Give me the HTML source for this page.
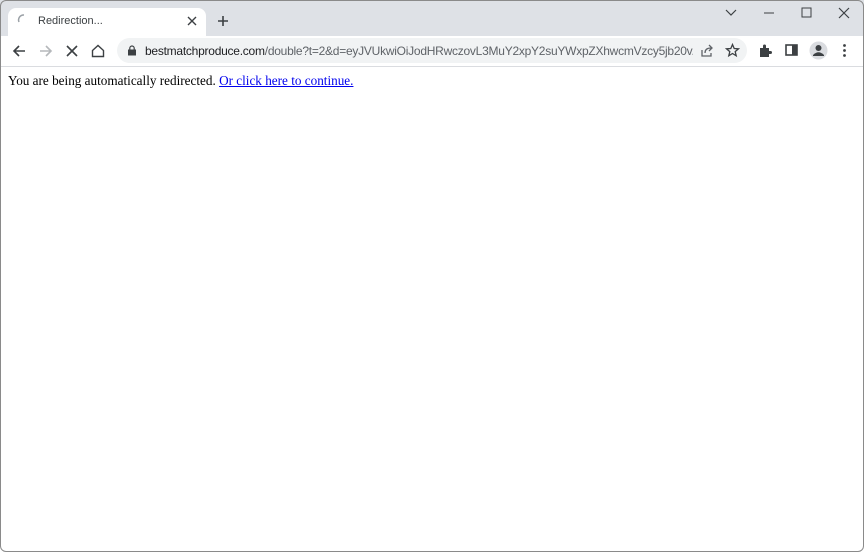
<!DOCTYPE html><html><head><style>
body{margin:0;width:864px;height:552px;overflow:hidden;background:#fff;position:relative;font-family:"Liberation Sans",sans-serif}
.a{position:absolute}
svg{position:absolute}
</style></head><body>
<div class="a" style="left:0;top:0;width:864px;height:36px;background:#dee1e6"></div>
<div class="a" style="left:8px;top:8px;width:198px;height:30px;background:#fff;border-radius:8px 8px 0 0"></div>
<svg style="left:17px;top:13px" width="12" height="12"><path d="M2 9 A5 5 0 0 1 7 2" stroke="#9aa0a6" stroke-width="1.5" fill="none"/></svg>
<div class="a" style="left:38px;top:15px;font-size:11px;color:#3c4043">Redirection...</div>
<svg style="left:187px;top:16px" width="10" height="10"><path d="M1 1L9 9M9 1L1 9" stroke="#3c4043" stroke-width="1.4"/></svg>
<svg style="left:217px;top:15px" width="12" height="12"><path d="M6 1V11M1 6H11" stroke="#3c4043" stroke-width="1.6"/></svg>
<svg style="left:725px;top:9px" width="12" height="8"><path d="M1 1L6 6L11 1" stroke="#3c4043" stroke-width="1.2" fill="none"/></svg>
<svg style="left:763px;top:12px" width="12" height="2"><path d="M1 1H11" stroke="#3c4043" stroke-width="1"/></svg>
<svg style="left:801px;top:7px" width="12" height="12"><rect x="1" y="1" width="9" height="9" stroke="#3c4043" fill="none"/></svg>
<svg style="left:838px;top:7px" width="12" height="12"><path d="M1 1L11 11M11 1L1 11" stroke="#3c4043" stroke-width="1.2"/></svg>
<div class="a" style="left:0;top:36px;width:864px;height:30px;background:#fff;border-bottom:1px solid #dadce0"></div>
<svg style="left:11px;top:43px" width="16" height="16"><path d="M14 8H3M8 3L3 8L8 13" stroke="#3c4043" stroke-width="1.6" fill="none"/></svg>
<svg style="left:38px;top:43px" width="16" height="16"><path d="M2 8H13M8 3L13 8L8 13" stroke="#b5b8bb" stroke-width="1.6" fill="none"/></svg>
<svg style="left:65px;top:44px" width="14" height="14"><path d="M2 2L12 12M12 2L2 12" stroke="#3c4043" stroke-width="1.6"/></svg>
<svg style="left:90px;top:43px" width="16" height="16"><path d="M2.5 7.5L8 2.5L13.5 7.5V13.5H2.5Z" stroke="#3c4043" stroke-width="1.4" fill="none"/></svg>
<div class="a" style="left:117px;top:38px;width:630px;height:25px;background:#f1f3f4;border-radius:13px"></div>
<svg style="left:127px;top:45px" width="10" height="11"><rect x="1" y="4.5" width="8" height="6" fill="#3c4043"/><path d="M2.8 5V3.2a2.2 2.2 0 0 1 4.4 0V5" stroke="#3c4043" stroke-width="1.2" fill="none"/></svg>
<div class="a" style="left:145px;top:44px;width:548px;overflow:hidden;font-size:12px;color:#202124;white-space:nowrap;letter-spacing:-0.25px">bestmatchproduce.com<span style="color:#5f6368">/double?t=2&amp;d=eyJVUkwiOiJodHRwczovL3MuY2xpY2suYWxpZXhwcmVzcy5jb20v...</span></div>
<svg style="left:699px;top:43px" width="15" height="15"><path d="M3 7V13H12V10M6 10C6 6 9 5 12 5M10 2L13 5L10 8" stroke="#5f6368" stroke-width="1.3" fill="none"/></svg>
<svg style="left:725px;top:43px" width="15" height="15"><path d="M7.5 1.5L9.2 5.5L13.5 5.8L10.2 8.6L11.2 12.8L7.5 10.5L3.8 12.8L4.8 8.6L1.5 5.8L5.8 5.5Z" stroke="#3c4043" stroke-width="1.3" fill="none"/></svg>
<svg style="left:758px;top:43px" width="15" height="15"><path d="M2 5H5V3a1.5 1.5 0 0 1 3 0V5H11V8H12.5a1.5 1.5 0 0 1 0 3H11V14H2Z" fill="#3c4043"/></svg>
<svg style="left:785px;top:43px" width="14" height="14"><rect x="1" y="2" width="11" height="10" stroke="#3c4043" stroke-width="1.6" fill="none"/><rect x="7" y="2" width="5" height="10" fill="#3c4043"/></svg>
<svg style="left:809px;top:41px" width="19" height="19"><circle cx="9.5" cy="9.5" r="9" fill="#dadce0"/><circle cx="9.5" cy="7" r="3" fill="#3c4043"/><path d="M4 14Q9.5 8.5 15 14V15H4Z" fill="#3c4043"/></svg>
<svg style="left:842px;top:43px" width="5" height="15"><circle cx="2.5" cy="2.5" r="1.4" fill="#3c4043"/><circle cx="2.5" cy="7.5" r="1.4" fill="#3c4043"/><circle cx="2.5" cy="12.5" r="1.4" fill="#3c4043"/></svg>
<div class="a" style="left:8px;top:73px;font-family:'Liberation Serif',serif;font-size:13.2px;color:#000;white-space:nowrap">You are being automatically redirected. <a style="color:#00e;text-decoration:underline">Or click here to continue.</a></div>
<div class="a" style="left:0;top:0;width:862px;height:550px;border:1px solid #8a8a8a;border-radius:6px;pointer-events:none"></div>
</body></html>
